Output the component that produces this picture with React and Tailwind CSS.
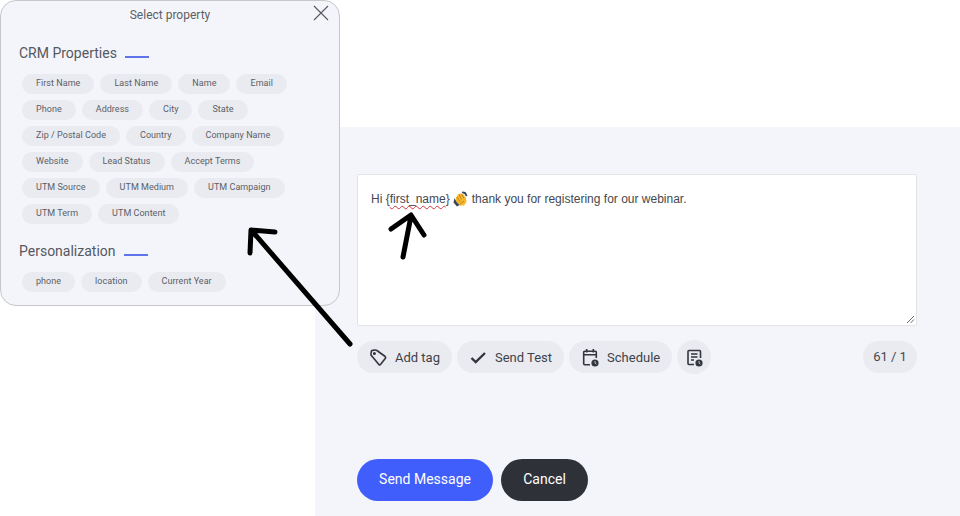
const crm = [
  ["First Name", "Last Name", "Name", "Email"],
  ["Phone", "Address", "City", "State"],
  ["Zip / Postal Code", "Country", "Company Name"],
  ["Website", "Lead Status", "Accept Terms"],
  ["UTM Source", "UTM Medium", "UTM Campaign"],
  ["UTM Term", "UTM Content"],
];
const pers = ["phone", "location", "Current Year"];

function Chip({ children }) {
  return (
    <span className="h-[20px] flex items-center px-[14px] rounded-full bg-[#e9ebf1] text-[9px] text-[#5c5f66] whitespace-nowrap tracking-[0.04px]">
      {children}
    </span>
  );
}

function Heading({ children }) {
  return (
    <div className="flex items-center gap-[8px] pl-[18px] text-[14px] leading-[20px] text-[#55585e]">
      <span>{children}</span>
      <span className="w-[24px] h-[2px] mt-[7px] bg-[#5d74ea]" />
    </div>
  );
}

function Pill({ icon, label }) {
  return (
    <button className="h-[32px] flex items-center gap-[7px] pl-[12px] pr-[12px] rounded-full bg-[#e9ebf1] text-[13px] text-[#3f4248]">
      {icon}
      <span className="pt-[1px]">{label}</span>
    </button>
  );
}

function Clock({ cx, cy }) {
  return (
    <g>
      <circle cx={cx} cy={cy} r="3.6" fill="#33363c" stroke="none" />
      <path d={`M${cx} ${cy - 1.8}V${cy}l1.3 1`} stroke="#e9ebf1" strokeWidth="0.8" fill="none" />
    </g>
  );
}

export default function App() {
  return (
    <div className="relative w-[960px] h-[516px] overflow-hidden bg-white font-['Roboto',sans-serif]">
      <div className="h-[127px]" />
      <div className="ml-[315px] h-[389px] bg-[#f4f5fa] pl-[42px] pr-[43px] pt-[47px]">
        <div className="relative h-[152px] bg-white border border-[#e3e4e8] rounded-[2px] pl-[13px] pt-[16px] font-['Liberation_Sans',sans-serif] text-[12px] leading-[16px] text-[#45484e]">
          <span>
            Hi {"{"}
            <span className="underline decoration-wavy decoration-[#d0343c] decoration-1 underline-offset-2">first_name</span>
            {"}"}
          </span>
          <svg width="16" height="16" viewBox="0 0 16 16" className="inline-block ml-[3px] mr-[3px] align-[-4px]">
            <path d="M3 6.500l2.500-3.500 2-.5 2.500.5 3 4 .5 4-2.500 3.500H6.500L2.500 10.500z" fill="#f5b82e" />
            <path d="M6 3.500L8.500 8.500M8.500 3L11 7.500M4 6l3 4.500M7 13l4-3" stroke="#b9790f" strokeWidth="0.800" fill="none" />
            <path d="M1.500 7l2 4 3 3-2.500 1.500-3.500-4zM9 .500l3.500.500 2 3.500-1.500 1-1.500-2.500-2.500-1z" fill="#37465a" />
          </svg>
          <span>thank you for registering for our webinar.</span>
          <svg width="9" height="9" viewBox="0 0 9 9" className="absolute right-[1px] bottom-[1px]">
            <path d="M1 8L8 1M4.500 8L8 4.500" stroke="#5a5a5a" strokeWidth="0.900" />
          </svg>
        </div>

        <div className="mt-[15px] flex items-center">
          <div className="flex items-center gap-[5px]">
            <Pill
              label="Add tag"
              icon={
                <svg width="19" height="19" viewBox="0 0 19 19" fill="none" stroke="#33363c" strokeWidth="1.600" strokeLinejoin="round">
                  <path d="M2 6.300L2.300 3.500a1.200 1.200 0 0 1 1.100-1.100L6.500 2a1.800 1.800 0 0 1 1.400.500l8.300 6a1.300 1.300 0 0 1 .200 1.800l-4.700 6a1.300 1.300 0 0 1-1.800.200L2.800 8a1.800 1.800 0 0 1-.800-1.700z" />
                  <circle cx="5.400" cy="5.400" r="0.700" fill="#33363c" />
                </svg>
              }
            />
            <Pill
              label="Send Test"
              icon={
                <svg width="19" height="19" viewBox="0 0 19 19" fill="none" stroke="#33363c" strokeWidth="2.400">
                  <path d="M2.500 10l4.200 4L16 5" />
                </svg>
              }
            />
            <Pill
              label="Schedule"
              icon={
                <svg width="19" height="19" viewBox="0 0 19 19" fill="none" stroke="#33363c" strokeWidth="1.600">
                  <path d="M9 16.800H3.700a1 1 0 0 1-1-1V4.300a1 1 0 0 1 1-1h10.600a1 1 0 0 1 1 1V10M2.700 6.800h12.600M5.700 1v3.500M12.300 1v3.500" />
                  <Clock cx={14} cy={15} />
                </svg>
              }
            />
            <button className="w-[34px] h-[34px] -my-px flex items-center justify-center rounded-full bg-[#e9ebf1]">
              <svg width="19" height="19" viewBox="0 0 19 19" fill="none" stroke="#33363c" strokeWidth="1.600">
                <path d="M9 16.500H4a1 1 0 0 1-1-1v-12a1 1 0 0 1 1-1h10.500a1 1 0 0 1 1 1V10M6 6h6.500M6 9h6.500M6 12h3" />
                <Clock cx={14} cy={15} />
              </svg>
            </button>
          </div>
          <div className="ml-auto h-[32px] w-[54px] flex items-center justify-center rounded-full bg-[#e9ebf1] text-[13px] text-[#45484e]">
            61 / 1
          </div>
        </div>

        <div className="mt-[86px] flex items-center gap-[8px] text-[14px] text-white">
          <button className="h-[42px] w-[136px] rounded-full bg-[#3f5efb] pb-[2px]">Send Message</button>
          <button className="h-[42px] w-[87px] rounded-full bg-[#2f3138] pb-[2px]">Cancel</button>
        </div>
      </div>

      <div className="absolute left-0 top-0 w-[340px] h-[306px] bg-[#f4f5fa] border border-[#c6c8cc] rounded-[16px]">
        <div className="pt-[7px] text-center text-[12px] leading-[14px] text-[#5c5f66]">Select property</div>
        <svg width="16" height="16" viewBox="0 0 16 16" className="absolute right-[10px] top-[4px]" stroke="#55585e" strokeWidth="1.100">
          <path d="M1 1l14 14M15 1L1 15" />
        </svg>
        <div className="mt-[21px]">
          <Heading>CRM Properties</Heading>
        </div>
        <div className="mt-[11px] pl-[21px] flex flex-col gap-[6px]">
          {crm.map((row, i) => (
            <div key={i} className="flex gap-[6px]">
              {row.map((c) => (
                <Chip key={c}>{c}</Chip>
              ))}
            </div>
          ))}
        </div>
        <div className="mt-[17px]">
          <Heading>Personalization</Heading>
        </div>
        <div className="mt-[11px] pl-[21px] flex gap-[6px]">
          {pers.map((c) => (
            <Chip key={c}>{c}</Chip>
          ))}
        </div>
      </div>

      <svg width="960" height="516" className="absolute left-0 top-0 pointer-events-none" fill="none" stroke="#000" strokeWidth="5" strokeLinecap="round" strokeLinejoin="round">
        <path d="M350 344L252 231M275 232L251 230L250 253" />
        <path d="M403 257L411 216M391 229L411 215L424 235" />
      </svg>
    </div>
  );
}
